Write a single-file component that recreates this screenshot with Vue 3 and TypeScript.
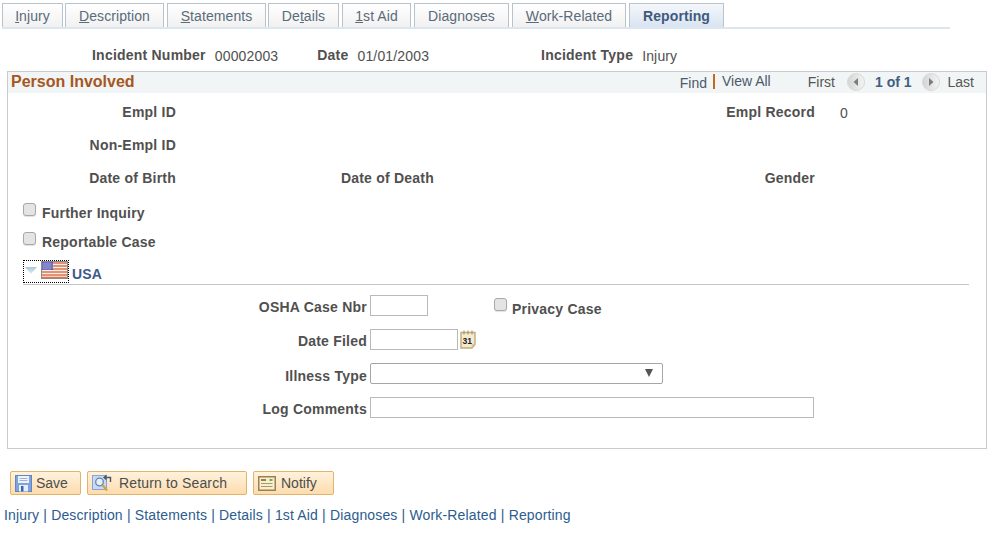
<script setup lang="ts">
interface Tab {
  before: string;
  key: string;
  after: string;
  width: number;
  gap: number;
}

const tabs: Tab[] = [
  { before: '', key: 'I', after: 'njury', width: 61, gap: 2 },
  { before: '', key: 'D', after: 'escription', width: 99, gap: 3 },
  { before: '', key: 'S', after: 'tatements', width: 99, gap: 2 },
  { before: 'De', key: 't', after: 'ails', width: 71, gap: 3 },
  { before: '', key: '1', after: 'st Aid', width: 69, gap: 3 },
  { before: 'Dia', key: '', after: 'gnoses', width: 95, gap: 3 },
  { before: '', key: 'W', after: 'ork-Related', width: 114, gap: 3 }
];

const links = ['Injury', 'Description', 'Statements', 'Details', '1st Aid', 'Diagnoses', 'Work-Related', 'Reporting'];
</script>

<template>
  <div class="page">
    <div class="tabs">
      <div
        v-for="t in tabs"
        :key="t.after"
        class="tab"
        :style="{ width: t.width + 'px', marginRight: t.gap + 'px' }"
      >
        {{ t.before }}<u>{{ t.key }}</u>{{ t.after }}
      </div>
      <div class="tab active">Reporting</div>
    </div>

    <div class="incident">
      <b class="lbl l1">Incident Number</b><span class="val v1">00002003</span>
      <b class="lbl l2">Date</b><span class="val v2">01/01/2003</span>
      <b class="lbl l3">Incident Type</b><span class="val v3">Injury</span>
    </div>

    <section class="panel">
      <header class="panel-head">
        <h2>Person Involved</h2>
        <div class="nav">
          <span class="find">Find</span>
          <span class="viewall">View All</span>
          <span class="first">First</span>
          <svg class="arrow" width="18" height="18" viewBox="0 0 18 18">
            <defs>
              <linearGradient id="arrowFill" x1="0" y1="0" x2="1" y2="0">
                <stop offset="0" stop-color="#d4d4d4" />
                <stop offset="1" stop-color="#f4f4f4" />
              </linearGradient>
            </defs>
            <circle cx="9" cy="9" r="8.5" fill="url(#arrowFill)" stroke="#d8d8d8" />
            <path d="M11 5v8L6.5 9z" fill="#7d7d7d" />
          </svg>
          <b class="count">1 of 1</b>
          <svg class="arrow next" width="18" height="18" viewBox="0 0 18 18">
            <circle cx="9" cy="9" r="8.5" fill="url(#arrowFill)" stroke="#d8d8d8" />
            <path d="M7 5v8l4.5-4z" fill="#7d7d7d" />
          </svg>
          <span class="last">Last</span>
        </div>
      </header>

      <div class="row r-empl">
        <b class="lbl col-a">Empl ID</b>
        <b class="lbl col-c">Empl Record</b>
        <span class="val record">0</span>
      </div>
      <div class="row r-non">
        <b class="lbl col-a">Non-Empl ID</b>
      </div>
      <div class="row r-dob">
        <b class="lbl col-a">Date of Birth</b>
        <b class="lbl col-b">Date of Death</b>
        <b class="lbl col-d">Gender</b>
      </div>

      <label class="check c-further"><i class="box"></i><b class="lbl">Further Inquiry</b></label>
      <label class="check c-report"><i class="box"></i><b class="lbl">Reportable Case</b></label>

      <div class="usa">
        <div class="focus">
          <svg width="12" height="7" viewBox="0 0 12 7" class="tri">
            <defs>
              <linearGradient id="triFill" x1="0" y1="0" x2="0" y2="1">
                <stop offset="0" stop-color="#a9c6da" />
                <stop offset="1" stop-color="#e4eef5" />
              </linearGradient>
            </defs>
            <path d="M0 0h12L6 7z" fill="url(#triFill)" />
          </svg>
          <svg width="27" height="18" viewBox="0 0 27 18" class="flag">
            <rect width="27" height="18" fill="#8a8a8a" />
            <rect x="1" y="1" width="25" height="16" fill="#f6efe6" />
            <path d="M1 2h25M1 5h25M1 8h25M1 11h25M1 14h25M1 16.5h25" stroke="#dd7550" stroke-width="1.4" />
            <rect x="1" y="1" width="11" height="8" fill="#5a5ab4" />
            <path d="M3 1v8M5 1v8M7 1v8M9 1v8M1 3h11M1 5h11M1 7h11" stroke="#a8a8e0" stroke-width="0.7" />
          </svg>
        </div>
        <span class="usa-name">USA</span>
      </div>

      <div class="form">
        <div class="f-row f-osha">
          <b class="lbl f-lbl">OSHA Case Nbr</b>
          <div class="input w-osha"></div>
          <i class="box privacy-box"></i>
          <b class="lbl privacy">Privacy Case</b>
        </div>
        <div class="f-row f-date">
          <b class="lbl f-lbl">Date Filed</b>
          <div class="input w-date"></div>
          <svg class="cal" width="16" height="19" viewBox="0 0 16 19">
            <path d="M1 2.5h14v12l-3 3.5H1z" fill="#f4ead0" stroke="#c0ab7c" stroke-width="1.4" />
            <path d="M11.5 18v-4h3.5z" fill="#d8c79c" />
            <path d="M4 0.5v4M8 0.5v4M12 0.5v4" stroke="#a08c5c" />
            <text x="2.5" y="13.5" font-size="8.5" font-weight="700" font-family="Liberation Sans, sans-serif" fill="#222">31</text>
          </svg>
        </div>
        <div class="f-row f-ill">
          <b class="lbl f-lbl">Illness Type</b>
          <div class="select"><span class="caret"></span></div>
        </div>
        <div class="f-row f-log">
          <b class="lbl f-lbl">Log Comments</b>
          <div class="input w-log"></div>
        </div>
      </div>
    </section>

    <div class="actions">
      <button class="btn b-save">
        <svg width="17" height="17" viewBox="0 0 17 17">
          <rect x="0.5" y="0.5" width="16" height="16" fill="#7fa3dc" stroke="#5f86c6" />
          <rect x="3" y="1" width="11" height="7" fill="#eef3fb" />
          <path d="M4.5 3.5h8M4.5 5.5h8" stroke="#9ab4de" />
          <rect x="4" y="10" width="9" height="6.5" fill="#e8eef8" />
          <rect x="6" y="11" width="2.5" height="5.5" fill="#3f66ad" />
        </svg>
        <span>Save</span>
      </button>
      <button class="btn b-return">
        <svg width="20" height="18" viewBox="0 0 20 18">
          <rect x="0.5" y="1.5" width="14" height="14" fill="#c9d9f0" stroke="#86a5d6" />
          <circle cx="7.5" cy="8" r="3.8" fill="#e6eefa" stroke="#6585ad" stroke-width="1.3" />
          <path d="M10.5 11l4.5 5.5" stroke="#cfa63c" stroke-width="2.2" />
          <path d="M18.5 8V3.5h-4" fill="none" stroke="#4a5568" stroke-width="1.4" />
          <path d="M11 3.5l3.5-3v6z" fill="#4a5568" />
        </svg>
        <span>Return to Search</span>
      </button>
      <button class="btn b-notify">
        <svg width="18" height="15" viewBox="0 0 18 15">
          <rect x="0.75" y="0.75" width="16.5" height="13.5" fill="#f8f0cc" stroke="#9a8052" stroke-width="1.5" />
          <path d="M3 4h5" stroke="#7a5a30" stroke-width="1.5" />
          <path d="M11.5 4h3" stroke="#63b04f" stroke-width="2" />
          <path d="M3 7.5h11.5M3 10.5h11.5" stroke="#a89a68" />
        </svg>
        <span>Notify</span>
      </button>
    </div>

    <div class="links">
      <template v-for="(l, i) in links" :key="l">
        <span v-if="i > 0" class="sep">|</span><span class="link">{{ l }}</span>
      </template>
    </div>
  </div>
</template>

<style>
html,
body {
  margin: 0;
  background: #fff;
}
</style>

<style scoped>
.page {
  width: 996px;
  height: 539px;
  overflow: hidden;
  font-family: 'Liberation Sans', Arial, sans-serif;
  font-size: 14px;
  color: #51504f;
  box-sizing: border-box;
  padding-top: 3px;
}
.lbl {
  font-weight: 700;
  color: #51504f;
  letter-spacing: 0.22px;
}
.val {
  letter-spacing: 0.15px;
  position: relative;
  top: 1px;
}

/* tabs */
.tabs {
  display: flex;
  width: 948px;
  margin-left: 2px;
  height: 24px;
  border-bottom: 2px solid #dbe6f0;
}
.tab {
  box-sizing: border-box;
  height: 24px;
  border: 1px solid #b9c3cc;
  border-bottom: none;
  background: linear-gradient(#fff, #f1f1f1);
  color: #5a6b7a;
  text-align: center;
  line-height: 25px;
  letter-spacing: 0.08px;
}
.tab.active {
  width: 95px;
  font-weight: 700;
  color: #3e5a7d;
  background: linear-gradient(#f4f7fb, #d9e4f1);
  letter-spacing: 0.1px;
}

/* incident line */
.incident {
  display: flex;
  height: 20px;
  margin-top: 16px;
  line-height: 20px;
}
.l1 { margin-left: 92px; }
.v1 { margin-left: 9px; }
.l2 { margin-left: 39px; }
.v2 { margin-left: 9px; }
.l3 { margin-left: 112px; }
.v3 { margin-left: 9px; }

/* panel */
.panel {
  box-sizing: border-box;
  width: 980px;
  height: 378px;
  margin: 6px 0 0 7px;
  border: 1px solid #c8ccd0;
}
.panel-head {
  display: flex;
  justify-content: space-between;
  align-items: center;
  height: 21px;
  background: #f2f5f5;
}
.panel-head h2 {
  margin: -2px 0 0 3px;
  font-size: 16px;
  font-weight: 700;
  color: #a5571f;
}
.nav {
  display: flex;
  align-items: center;
  color: #555;
  margin: -2px 12px 0 0;
}
.find {
  padding: 2px 6px 0 0;
  color: #4a5a6a;
}
.viewall {
  padding-left: 7px;
  border-left: 2px solid #c46a1b;
  line-height: 15px;
  color: #4a5a6a;
}
.first { margin-left: 37px; }
.arrow { margin: 0 0 0 12px; }
.arrow.next { margin-left: 10px; }
.count {
  margin-left: 10px;
  color: #40607f;
}
.last { margin-left: 8px; }

.row {
  display: flex;
  height: 20px;
  line-height: 20px;
}
.r-empl { margin-top: 9px; }
.r-non { margin-top: 13px; }
.r-dob { margin-top: 13px; }
.col-a {
  width: 168px;
  text-align: right;
}
.col-b {
  width: 258px;
  text-align: right;
}
.col-c {
  width: 639px;
  text-align: right;
}
.col-d {
  width: 381px;
  text-align: right;
}
.record { margin-left: 25px; }

.check {
  display: flex;
  align-items: center;
  height: 20px;
  line-height: 20px;
  margin-left: 15px;
}
.c-further { margin-top: 15px; }
.c-report { margin-top: 9px; }
.box {
  display: block;
  box-sizing: border-box;
  width: 13px;
  height: 13px;
  border: 1px solid #a8a8a8;
  border-radius: 3px;
  background: #e4e4e4;
  box-shadow: 0 1px 1px rgba(0, 0, 0, 0.12);
}
.check .box {
  margin-right: 6px;
  margin-top: -7px;
}

.usa {
  display: flex;
  align-items: flex-end;
  width: 946px;
  margin: 8px 0 0 15px;
  height: 24px;
  border-bottom: 1px solid #c4c4c4;
}
.focus {
  display: flex;
  align-items: flex-start;
  box-sizing: border-box;
  width: 46px;
  height: 23px;
  margin-bottom: 1px;
  border: 1px dotted #000;
}
.tri { margin: 6px 4px 0 1px; }
.usa-name {
  margin-left: 3px;
  font-weight: 700;
  color: #3e5a8a;
  letter-spacing: 0.2px;
  line-height: 20px;
}

.form { margin-top: 9px; }
.f-row {
  display: flex;
  align-items: center;
  height: 22px;
}
.f-date { margin-top: 12px; }
.f-ill { margin-top: 12px; }
.f-log { margin-top: 12px; }
.f-lbl {
  width: 359px;
  text-align: right;
  margin: 4px 3px 0 0;
}
.f-ill .f-lbl { margin-top: 6px; }
.input,
.select {
  box-sizing: border-box;
  height: 21px;
  border: 1px solid #b9b9b9;
  background: #fff;
}
.w-osha { width: 58px; }
.w-date { width: 88px; }
.w-log { width: 444px; }
.select {
  position: relative;
  width: 293px;
  border-radius: 2px;
  border-color: #a6a6a6;
}
.caret {
  position: absolute;
  right: 9px;
  top: 5px;
  width: 0;
  height: 0;
  border-left: 4px solid transparent;
  border-right: 4px solid transparent;
  border-top: 8px solid #555;
}
.privacy-box {
  margin-left: 66px;
  margin-top: -1px;
}
.privacy {
  margin-left: 5px;
  margin-top: 7px;
}
.cal { margin-left: 2px; }

/* buttons */
.actions {
  display: flex;
  gap: 6px;
  margin: 22px 0 0 10px;
}
.btn {
  display: flex;
  align-items: center;
  box-sizing: border-box;
  height: 24px;
  padding: 0 0 0 4px;
  border: 1px solid #e1b36b;
  border-radius: 2px;
  background: linear-gradient(#fff2dc, #fddcae);
  font-family: inherit;
  font-size: 14px;
  color: #4d4d4d;
}
.b-save { width: 71px; }
.b-save span { margin-left: 4px; }
.b-return { width: 160px; }
.b-return span { margin-left: 7px; letter-spacing: 0.15px; }
.b-notify { width: 81px; }
.b-notify span { margin-left: 5px; }

.links {
  display: flex;
  margin: 10px 0 0 4px;
  color: #2d5c8f;
  line-height: 20px;
  letter-spacing: 0.15px;
}
.sep {
  margin: 0 4.1px;
  color: #2d5c8f;
}
</style>
